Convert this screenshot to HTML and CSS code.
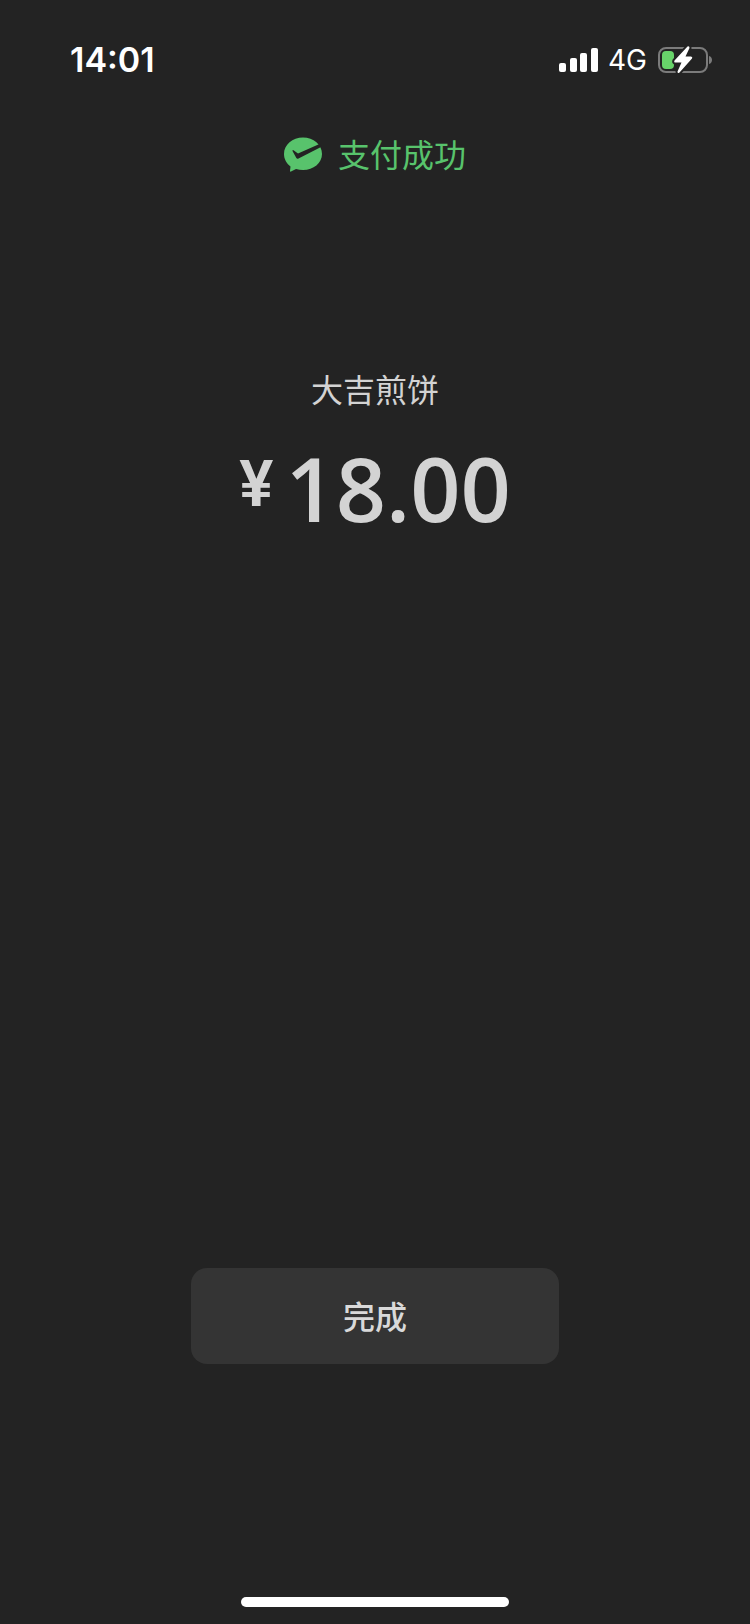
FILE: index.html
```html
<!DOCTYPE html>
<html lang="zh-CN">
<head>
  <meta charset="UTF-8">
  <meta name="viewport" content="width=device-width, initial-scale=1.0">
  <title>支付成功</title>
  <link rel="stylesheet" href="styles.css">
</head>
<body>
  <header class="status-bar">
    <time class="clock">14:01</time>
    <div class="indicators">
      <svg class="signal" viewBox="0 0 40 26" aria-hidden="true">
        <rect x="0" y="16" width="7" height="9" rx="2"/>
        <rect x="11" y="11" width="7" height="14" rx="2"/>
        <rect x="21" y="6" width="7" height="19" rx="2"/>
        <rect x="32" y="1" width="7" height="24" rx="2"/>
      </svg>
      <span class="network">4G</span>
      <svg class="battery" viewBox="0 0 56 30" aria-hidden="true">
        <rect class="battery-shell" x="2" y="3" width="48" height="24" rx="7"/>
        <path class="battery-tip" d="M52 11c4 1 4 7 0 8z"/>
        <rect class="battery-level" x="5" y="6" width="12" height="18" rx="4"/>
        <path class="battery-bolt" d="M30.500 1.500L17.500 15.500Q16.500 17.500 18.500 17.500H24.500L20.500 26.500Q20.500 29 22.500 27.500L35 13.500Q36 12 34 11.500H28.500L32.500 3Q32.500 0.500 30.500 1.500Z"/>
      </svg>
    </div>
  </header>

  <main>
    <div class="result">
      <svg class="pay-icon" viewBox="0 0 38 36" aria-hidden="true">
        <path class="bubble" d="M19 0.500C8.500 0.500 0 7.700 0 17C0 22 2.500 26.500 6.500 29.500L6 34Q6 35 7 34.500L12 32Q15.500 33 19 33C29.500 33 38 26 38 17C38 7.700 29.500 0.500 19 0.500Z"/>
        <path class="check" d="M9.500 13.200L14 16.500L35.500 7L38 9.500L14.500 21.500Q13 22.300 12.200 20.800L8.500 14Q8.500 12.500 9.500 13.200Z"/>
      </svg>
      <h1>支付成功</h1>
    </div>

    <p class="merchant">大吉煎饼</p>
    <p class="amount"><span class="currency">¥</span>18.00</p>

    <button type="button" class="done">完成</button>
  </main>

  <div class="home-bar"></div>
</body>
</html>
```

FILE: styles.css
```css
* { box-sizing: border-box; }
body {
  display: flex;
  flex-direction: column;
  min-height: 100vh;
  margin: 0;
  background: #232323;
  color: #d3d3d3;
  font-family: "Liberation Sans", "Noto Sans CJK SC", sans-serif;
}
h1, p { margin: 0; font-weight: 400; }

.status-bar {
  display: flex;
  justify-content: space-between;
  align-items: center;
  height: 119px;
  padding: 0 37px 0 70px;
  color: #fff;
  font-family: Inter, sans-serif;
}
.clock { font-size: 34px; font-weight: 600; }
.indicators { display: flex; align-items: center; }
.signal { width: 40px; height: 26px; margin-right: 9px; fill: #fff; }
.network { margin-right: 10px; font-size: 28px; }
.battery { width: 56px; height: 30px; }
.battery-shell { fill: none; stroke: #7b7b7b; stroke-width: 2; }
.battery-tip { fill: #7b7b7b; }
.battery-level { fill: #68d36a; }
.battery-bolt { fill: #fff; stroke: #232323; stroke-width: 4; paint-order: stroke; }

main {
  flex: 1;
  display: flex;
  flex-direction: column;
  align-items: center;
  font-family: "Noto Sans CJK SC", sans-serif;
  font-size: 32px;
  line-height: 48px;
}
.result { display: flex; align-items: flex-start; gap: 16px; margin-top: 10px; color: #58c36c; }
.result h1 { font-size: 32px; }
.pay-icon { width: 38px; height: 36px; margin-top: 8px; }
.bubble { fill: #58c36c; }
.check { fill: #232323; }
.merchant { margin-top: 187px; }
.amount {
  display: flex;
  align-items: flex-start;
  gap: 12px;
  margin-top: 28px;
  font-family: "Open Sans", sans-serif;
  font-size: 88px;
  font-weight: 600;
  line-height: 96px;
}
.currency { font-family: Roboto, sans-serif; font-size: 64px; line-height: 90px; }
.done {
  width: 368px;
  max-width: 90%;
  height: 96px;
  margin-top: auto;
  margin-bottom: 233px;
  padding: 0 0 3px;
  border: none;
  border-radius: 16px;
  background: #343434;
  color: #d9d9d9;
  font-family: inherit;
  font-size: 32px;
  font-weight: 500;
  cursor: pointer;
}
.home-bar {
  width: 268px;
  height: 10px;
  margin: 0 auto 17px;
  border-radius: 5px;
  background: #fff;
}
```
